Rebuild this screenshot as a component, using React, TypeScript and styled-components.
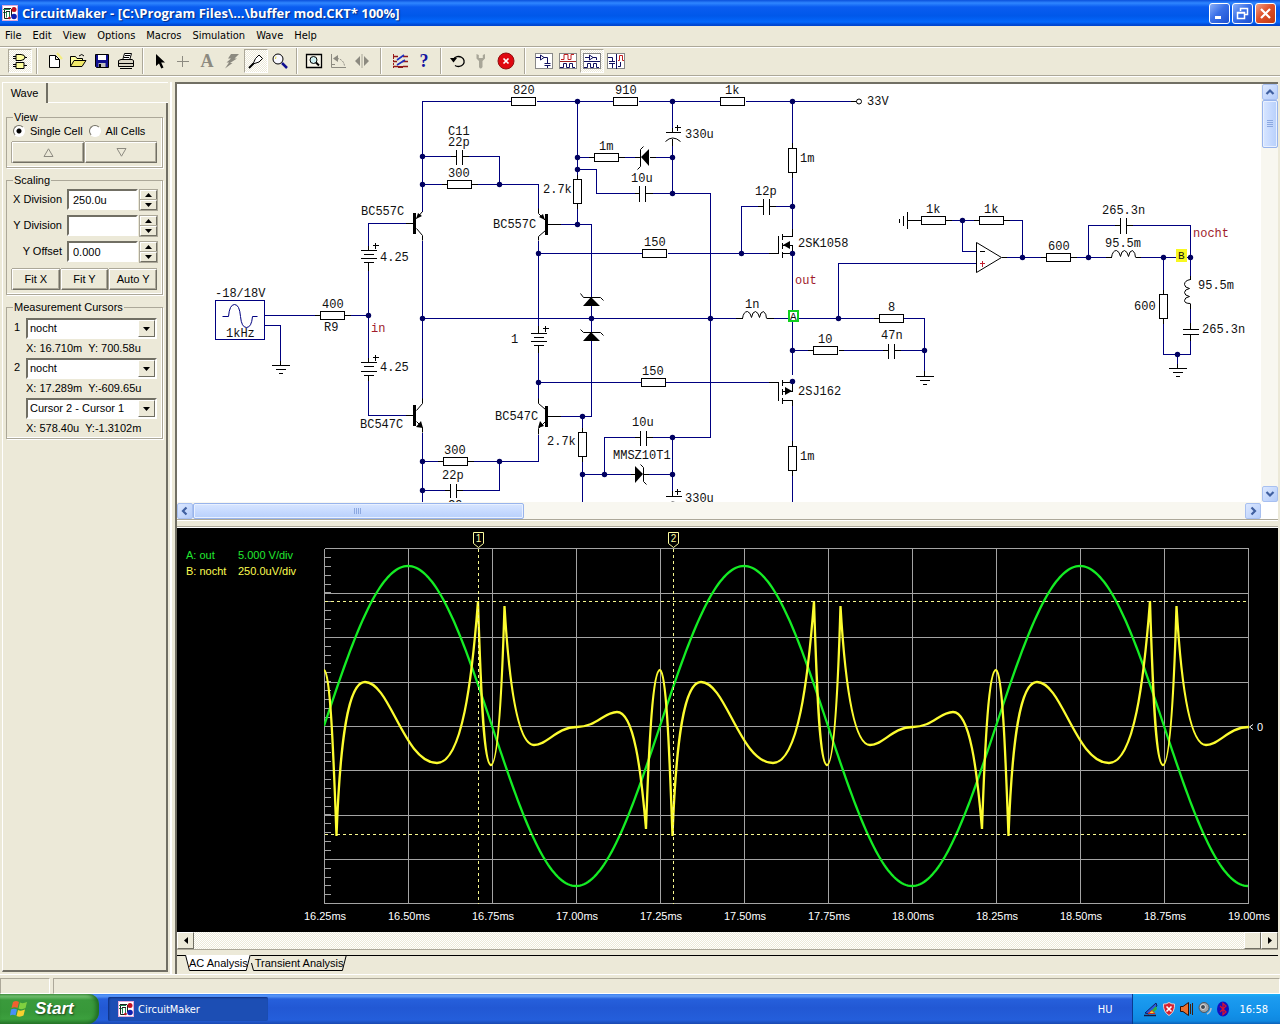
import React from "react";
import styled, { createGlobalStyle, css } from "styled-components";

const face = "#ece9d8";
const shade = "#aca899";
const dark = "#716f64";
const ui = `"Liberation Sans", Arial, sans-serif`;
const tahoma = `"DejaVu Sans Condensed", "DejaVu Sans", sans-serif`;

const Global = createGlobalStyle`
  * { box-sizing: border-box; }
  body { margin: 0; background: ${face}; color: #000; font: 11px/13px ${ui}; overflow: hidden; }
  button, input, select { font: inherit; color: inherit; margin: 0; }
`;

const Desktop = styled.div`
  min-height: 100vh;
  display: flex;
  flex-direction: column;
`;

/* ---------- title bar and menu ---------- */
const TitleBar = styled.header`
  display: flex;
  align-items: center;
  gap: 4px;
  height: 26px;
  padding: 0 4px 0 2px;
  background: linear-gradient(#0a50dc 0, #2f86ff 3px, #0a5cf0 7px, #0058ea 16px, #0468fc 22px, #0046d0 25px);
`;
const Title = styled.h1`
  flex: 1;
  margin: 0;
  font: 700 13px/20px "Open Sans", "Noto Sans", sans-serif;
  color: #fff;
  text-shadow: 1px 1px 1px #0a2a80;
  white-space: nowrap;
`;
const Caption = styled.div`
  display: flex;
  gap: 2px;
`;
const CaptionButton = styled.button<{ $close?: boolean }>`
  width: 21px;
  height: 21px;
  padding: 0;
  border: 1px solid #fff;
  border-radius: 3px;
  background: ${p => p.$close
    ? "linear-gradient(135deg, #f0a088, #e0502a 45%, #c03a10)"
    : "linear-gradient(135deg, #8cb0f8, #3a70e8 45%, #1c50d0)"};
  svg { display: block; margin: auto; }
`;
const MenuBar = styled.nav`
  display: flex;
  gap: 1px;
  height: 20px;
  padding: 0 0 2px;
`;
const MenuItem = styled.button`
  padding: 0 5px;
  border: 0;
  background: none;
  font-family: ${tahoma};
`;

/* ---------- toolbar ---------- */
const Toolbar = styled.div`
  display: flex;
  align-items: center;
  height: 30px;
  padding-left: 8px;
  border-top: 1px solid ${shade};
  border-bottom: 1px solid ${shade};
  box-shadow: inset 0 1px 0 #fff, 0 1px 0 #fff;
`;
const dither = `repeating-conic-gradient(#fff 0 25%, ${face} 0 50%) 0 0 / 2px 2px`;
const ToolButton = styled.button<{ $pressed?: boolean }>`
  width: 24px;
  height: 24px;
  padding: 0;
  border: 1px solid transparent;
  background: none;
  ${p => p.$pressed && css`
    background: ${dither};
    border-color: ${shade} #fff #fff ${shade};
  `}
  svg { display: block; margin: auto; }
`;
const Separator = styled.span<{ $wide?: boolean }>`
  width: 2px;
  height: 26px;
  margin: 0 ${p => (p.$wide ? 6 : 4)}px;
  border-left: 1px solid ${shade};
  border-right: 1px solid #fff;
`;

/* ---------- work area ---------- */
const Work = styled.main`
  flex: 1;
  display: flex;
  min-height: 0;
  padding: 6px 2px 0 0;
`;
const Side = styled.aside`
  flex: 0 0 175px;
  display: flex;
  flex-direction: column;
  padding: 0 7px 2px 2px;
  background: linear-gradient(#fff, #fff) 170px 0 / 2px 100% no-repeat;
`;
const SideTabs = styled.div`
  display: flex;
  height: 21px;
  border-top: 1px solid #fff;
`;
const SideTab = styled.button`
  width: 46px;
  padding: 0;
  border: 0;
  border-left: 1px solid #fff;
  border-right: 2px solid ${dark};
  background: ${face};
`;
const SideTabRest = styled.span`
  flex: 1;
  border-bottom: 1px solid #fff;
`;
const SidePage = styled.div`
  flex: 1;
  display: flex;
  flex-direction: column;
  gap: 6px;
  padding: 8px 3px 0 3px;
  border-left: 1px solid #fff;
  border-right: 2px solid ${dark};
  border-bottom: 2px solid ${dark};
`;
const Group = styled.fieldset`
  min-width: 0;
  margin: 0;
  padding: 0 5px 4px;
  border: 1px solid ${shade};
  box-shadow: inset -1px -1px 0 #fff, 1px 1px 0 #fff;
  legend { padding: 0 1px; margin-left: 1px; line-height: 13px; }
`;
const Radios = styled.div`
  display: flex;
  gap: 6px;
  height: 14px;
  margin-bottom: 4px;
  padding-left: 1px;
`;
const RadioLabel = styled.label`
  display: flex;
  align-items: center;
  gap: 5px;
  white-space: nowrap;
`;
const Radio = styled.input`
  appearance: none;
  width: 12px;
  height: 12px;
  border-radius: 50%;
  border: 1px solid;
  border-color: ${dark} #fff #fff ${dark};
  background: #fff;
  &:checked { background: radial-gradient(circle, #000 0 2px, #fff 3px); }
`;
const ButtonRow = styled.div<{ $top?: boolean }>`
  display: flex;
  gap: 1px;
  ${p => p.$top && "margin-top: 7px;"}
`;
const PushButton = styled.button`
  flex: 1 1 0;
  height: 21px;
  padding: 0;
  border: 1px solid;
  border-color: #fff ${dark} ${dark} #fff;
  background: ${face};
  box-shadow: inset -1px -1px 0 ${shade}, 0 -1px 0 ${shade}, -1px 0 0 ${shade};
  white-space: nowrap;
  svg { display: block; margin: auto; }
`;
const ScaleRow = styled.div`
  display: flex;
  align-items: center;
  height: 21px;
  margin-top: 5px;
  legend + & { margin-top: 2px; }
  label { flex: 1; padding-right: 5px; text-align: right; white-space: nowrap; }
`;
const sunken = css`
  border: 2px solid;
  border-color: ${dark} #fff #fff ${dark};
  background: #fff;
`;
const Field = styled.input`
  ${sunken}
  width: 71px;
  height: 21px;
  padding: 0 4px;
`;
const Spinner = styled.div`
  display: flex;
  flex-direction: column;
  width: 17px;
  margin-left: 2px;
  button {
    height: 10px;
    padding: 0;
    border: 1px solid;
    border-color: #fff ${dark} ${dark} #fff;
    background: ${face};
    box-shadow: 0 0 0 1px ${shade};
  }
  svg { display: block; margin: auto; }
`;
const CursorRow = styled.div`
  display: grid;
  grid-template-columns: 14px 1fr;
  padding: 4px 0 0;
  p { grid-column: 2; margin: 3px 0 0; height: 12px; white-space: pre; }
  > span { padding: 3px 0 0 2px; }
`;
const Combo = styled.div`
  ${sunken}
  display: grid;
  grid-template-columns: 1fr 17px;
  height: 21px;
  select {
    appearance: none;
    grid-area: 1 / 1 / 2 / 3;
    border: 0;
    border-radius: 0;
    padding: 0 20px 0 2px;
    background: #fff;
  }
  span {
    grid-area: 1 / 2;
    display: flex;
    align-items: center;
    justify-content: center;
    pointer-events: none;
    border: 1px solid;
    border-color: #fff ${dark} ${dark} #fff;
    background: ${face};
  }
`;

/* ---------- documents ---------- */
const Documents = styled.section`
  flex: 1;
  min-width: 0;
  display: flex;
  flex-direction: column;
  border-left: 2px solid ${dark};
  border-top: 2px solid ${dark};
`;
const Sheet = styled.div`
  display: grid;
  grid-template-columns: minmax(0, 1fr) 17px;
  grid-template-rows: auto 17px;
  background: #fff;
  border-bottom: 1px solid ${shade};
`;
const Viewport = styled.div`
  overflow: hidden;
  svg { display: block; }
`;
const Bar = styled.div<{ $vertical?: boolean }>`
  display: flex;
  flex-direction: ${p => (p.$vertical ? "column" : "row")};
  justify-content: space-between;
  background: #f8f7f0;
  padding: ${p => (p.$vertical ? "0 0 0 1px" : "1px 0 0")};
`;
const BarStart = styled.div<{ $vertical?: boolean }>`
  display: flex;
  flex-direction: ${p => (p.$vertical ? "column" : "row")};
  width: ${p => (p.$vertical ? "auto" : "32%")};
  height: ${p => (p.$vertical ? "64px" : "auto")};
`;
const BarArrow = styled.button`
  flex: none;
  width: 16px;
  height: 16px;
  padding: 0;
  border: 1px solid #a8c0f0;
  border-radius: 2px;
  background: linear-gradient(135deg, #dce8ff, #b4ccfa);
  svg { display: block; margin: auto; }
`;
const Thumb = styled.div<{ $vertical?: boolean }>`
  flex: 1;
  display: flex;
  align-items: center;
  justify-content: center;
  border: 1px solid #98b4ec;
  border-radius: 2px;
  box-shadow: inset 0 0 0 1px #e8f0ff;
  background: linear-gradient(${p => (p.$vertical ? "90deg" : "180deg")}, #d8e6ff, #c4d8fe 60%, #b8d0fa);
`;
const Splitter = styled.div`
  height: 8px;
  border-top: 1px solid #fff;
  border-bottom: 1px solid #fff;
  box-shadow: inset 0 -1px 0 ${shade};
`;
const Scope = styled.div`
  flex: 1;
  overflow: hidden;
  background: #000;
  svg { display: block; }
`;
const ClassicBar = styled.div`
  display: flex;
  height: 17px;
  background: ${dither};
  button, span {
    width: 17px;
    padding: 0;
    border: 1px solid;
    border-color: #fff ${dark} ${dark} #fff;
    background: ${face};
  }
  span { margin-left: auto; }
  svg { display: block; margin: auto; }
`;
const SheetTabs = styled.div`
  display: flex;
  height: 25px;
  padding: 0 0 0 8px;
  border-top: 1px solid ${shade};
  background: linear-gradient(#000, #000) 0 5px / 100% 1px no-repeat;
`;
const SheetTab = styled.button`
  position: relative;
  z-index: 0;
  height: 16px;
  margin: 5px 0 0;
  padding: 0 3px 0 4px;
  border: 0;
  background: none;
  white-space: nowrap;
  svg { position: absolute; inset: 0; width: 100%; height: 100%; z-index: -1; }
`;

/* ---------- status bar and taskbar ---------- */
const StatusBar = styled.footer`
  display: flex;
  gap: 3px;
  height: 20px;
  padding-top: 3px;
  border-top: 1px solid #fff;
`;
const StatusCell = styled.div<{ $grow?: boolean }>`
  flex: ${p => (p.$grow ? "1" : "0 0 50px")};
  border: 1px solid;
  border-color: ${shade} #fff #fff ${shade};
`;
const Taskbar = styled.nav`
  display: flex;
  align-items: stretch;
  height: 30px;
  background: linear-gradient(#3a80f0 0, #5a98f8 2px, #2660dc 5px, #2258d4 14px, #245edb 26px, #1a48b0 30px);
  color: #fff;
  font-family: ${tahoma};
`;
const Start = styled.button`
  display: flex;
  align-items: center;
  gap: 6px;
  width: 99px;
  padding: 0 0 0 10px;
  border: 0;
  border-radius: 0 10px 12px 0;
  background: linear-gradient(#5fb45c 0, #7cc878 2px, #3a9a3c 6px, #379839 18px, #3ca03e 25px, #2a7c2c 30px);
  box-shadow: inset -3px 0 4px #1f6a22;
  font: italic bold 17px/20px ${ui};
  && { color: #fff; }
  text-shadow: 1px 1px 2px #1a401a;
`;
const Task = styled.button`
  display: flex;
  align-items: center;
  gap: 4px;
  width: 160px;
  margin: 3px auto 3px 9px;
  padding: 0 10px;
  border: 0;
  border-radius: 2px;
  background: #1c4eb4;
  box-shadow: inset 1px 1px 2px #0e2f80;
  && { color: #fff; }
`;
const Language = styled.span`
  align-self: center;
  margin-right: 20px;
`;
const Tray = styled.div`
  display: flex;
  align-items: center;
  gap: 2px;
  padding: 0 12px 0 10px;
  border-left: 1px solid #0a3a90;
  background: linear-gradient(#1ab0f8 0, #1c9cf0 3px, #1290e8 20px, #0f88e0 27px, #0c60b8 30px);
  time { margin-left: 6px; }
`;

/* ---------- icons ---------- */
const Svg = ({ w = 18, h = 18, children }: { w?: number; h?: number; children: React.ReactNode }) => (
  <svg width={w} height={h} viewBox={`0 0 ${w} ${h}`} fill="none" stroke="#000" aria-hidden="true">{children}</svg>
);

const AppIcon = () => (
  <Svg w={16} h={16}>
    <rect x=".5" y=".5" width="15" height="15" fill="#fff" stroke="#e0a8d8" />
    <path d="M1 4.500H8M1 7.500H4M4.500 6V12.500M7.500 6V13" stroke="#208850" />
    <path d="M2 3.500H9M4 6.500H8M9.500 4V11M2.500 5V13.500H8" stroke="#202020" />
    <circle cx="12" cy="4.500" r="2.500" fill="#c01020" stroke="none" />
    <circle cx="12" cy="11.500" r="2.800" fill="#1020b0" stroke="none" />
    <circle cx="7.500" cy="13" r="1.300" fill="#c01020" stroke="none" />
  </Svg>
);

type Tool = { name: string; pressed?: boolean; icon: React.ReactNode };
const waveUp = "M2 7.500H5V2.500H9V7.500H12V2.500H15";
const groups: { wide?: boolean; tools: Tool[] }[] = [
  { tools: [
    { name: "Digital parts", pressed: true, icon: <>
      <path d="M5 2.500H10Q14 3 14 5Q14 8 10 8.500H5ZM2 4.500H5M2 6.500H5M14 5.500H16" fill="#ffffa0" />
      <path d="M5 10.500H13V16.500H5ZM2 12.500H5M2 14.500H5M13 13.500H16" fill="#ffffa0" />
    </> },
  ] },
  { tools: [
    { name: "New", icon: <><path d="M12 1L17 7" stroke="#f4ee80" strokeWidth="2" /><path d="M4.500 3.500H10.500L14.500 7.500V15.500H4.500ZM10.500 3.500V7.500H14.500" fill="#fff" /></> },
    { name: "Open", icon: <><path d="M1.500 14.500V4.500H6.500L8 6.500H13.500V9" fill="#ffffa0" /><path d="M1.500 14.500L5 8.500H17L13 14.500Z" fill="#f0e868" /><path d="M10 4Q13 1 15 4" /></> },
    { name: "Save", icon: <><path d="M2.500 2.500H15.500V15.500H3.500L2.500 14.500Z" fill="#101090" /><path d="M5 3H13V8H5Z" fill="#fff" stroke="none" /><path d="M5.500 11H12.500V15H5.500Z" fill="#c0c0c0" stroke="none" /><path d="M7 12V15" strokeWidth="2" /></> },
    { name: "Print", icon: <><path d="M5.500 8.500L7.500 1.500H14.500L12.500 8.500" fill="#fff" /><path d="M8 3.500H13M7 5.500H12" /><path d="M1.500 8.500L4 7.500H15L16.500 8.500V14.500H1.500ZM1.500 11.500H16.500M3 16.500H15" fill="#d8d4c4" /></> },
  ] },
  { tools: [
    { name: "Select", icon: <path d="M5 2V14L8 11.500L10.300 16.500L12.500 15.500L10.200 10.500H14Z" fill="#000" stroke="none" /> },
    { name: "Wire", icon: <path d="M2 9.500H14M7.500 4V15" stroke="#8c8a80" /> },
    { name: "Text", icon: <text x="8" y="15" textAnchor="middle" fontFamily="Liberation Serif, serif" fontSize="18" fontWeight="bold" fill="#8c8a80" stroke="none">A</text> },
    { name: "Delete", icon: <path d="M8 2H16L11.500 6.500H14L7 11H9.500L2 16.500L6 10.500H3.500L8 6.500H5Z" fill="#8c8a80" stroke="none" /> },
    { name: "Probe", pressed: true, icon: <><path d="M2 16L6.500 11.500" strokeWidth="2" /><path d="M6 12L8.500 6.500L12 3L15.500 6.500L12 10Z" fill="#fff" /></> },
    { name: "Zoom", icon: <><circle cx="7" cy="7" r="5" fill="#f8f8ff" /><path d="M5 4.500L4.500 7" stroke="#e0d840" /><path d="M11 11L16 16" stroke="#101090" strokeWidth="2.500" /></> },
  ] },
  { tools: [
    { name: "Fit to window", icon: <><path d="M1.500 2.500H16.500V15.500H1.500Z" fill="#f8f6ea" strokeWidth="1.300" /><circle cx="8.500" cy="8" r="3.500" fill="#cdeef0" /><path d="M11 10.500L14 13.500" strokeWidth="2" /></> },
    { name: "Rotate", icon: <><path d="M2.500 2V15.500H17M2.500 12.500H6" stroke="#8c8a80" /><path d="M8 6.500A8 8 0 0 1 15.500 14" stroke="#8c8a80" strokeDasharray="2 1" /><path d="M4 6.500L9 3V10Z" fill="#8c8a80" stroke="none" /></> },
    { name: "Mirror", icon: <><path d="M9 2V16" stroke="#a8a698" /><path d="M7 4V14L2 9ZM11 4V14L16 9Z" fill="#8c8a80" stroke="none" /></> },
  ] },
  { wide: true, tools: [
    { name: "Connections", icon: <>
      <path d="M2.500 2V16" stroke="#a01818" strokeDasharray="2 1" />
      <path d="M2 4.500H7M12 4.500H17M2 9.500H6M11 9.500H17M2 14.500H7M12 14.500H17" stroke="#901818" strokeWidth="1.600" />
      <path d="M6 8L13 3M6 13L14 8" stroke="#2030c0" strokeWidth="1.600" />
      <path d="M7 15H12" stroke="#901818" strokeWidth="2" />
    </> },
    { name: "Help", icon: <text x="9" y="15" textAnchor="middle" fontFamily="Liberation Serif, serif" fontWeight="bold" fontSize="18" fill="#1414a0" stroke="none">?</text> },
  ] },
  { tools: [
    { name: "Reset", icon: <><path d="M4.500 7A5.700 5 0 1 1 6 13.500" strokeWidth="1.300" /><path d="M1 6H8L4.500 10.500Z" fill="#000" stroke="none" /></> },
    { name: "Setup", icon: <path d="M3.500 2V6.500L6 9V15Q7.500 18 9.500 15V9L12 6.500V2L9.800 3V6H5.800V3Z" fill="#a8a698" stroke="none" /> },
    { name: "Stop", icon: <><circle cx="9" cy="9" r="8" fill="#e00810" stroke="#901010" /><path d="M6.500 6.500L11.500 11.500M11.500 6.500L6.500 11.500" stroke="#fff" strokeWidth="1.700" /></> },
  ] },
  { wide: true, tools: [
    { name: "Schematic view", icon: <><rect x=".5" y="1.500" width="17" height="15" fill="#fff" stroke="#888" /><path d="M1 5.500H5M5.500 3V8L9 5.500ZM9 5.500H12.500V11M9.500 11.500H15.500M9.500 13.500H15.500M12.500 14V16" stroke="#101060" /></> },
    { name: "Wave view", icon: <><rect x=".5" y="1.500" width="17" height="15" fill="#fff" stroke="#888" /><path d={waveUp} stroke="#c02020" /><path d="M1 9.500H17" stroke="#a02020" /><path d="M1 15.500H4.500V11.500H7.500V15.500H10.500V11.500H13.500V15.500H16" stroke="#101060" /></> },
    { name: "Split horizontal", pressed: true, icon: <><rect x=".5" y="1.500" width="17" height="15" fill="#fff" stroke="#888" /><path d="M2 5.500H6M6.500 3V8L10 5.500ZM10 5.500H13.500V8M1 9.500H17M1 15.500H4.500V11.500H7.500V15.500H10.500V11.500H13.500V15.500H16" stroke="#101060" /></> },
    { name: "Split vertical", icon: <><rect x=".5" y="1.500" width="17" height="15" fill="#fff" stroke="#888" /><path d="M1 5.500H5.500V9M2 9.500H8M2 11.500H8M5.500 12V16M9.500 2V17M11 14.500H13.500V10" stroke="#101060" /><path d="M11 8.500H12.500V3.500H15.500V8.500H17" stroke="#c02020" /></> },
  ] },
];

const Triangle = ({ d, fill = "#000", w = 7, h = 4 }: { d: string; fill?: string; w?: number; h?: number }) => (
  <Svg w={w} h={h}><path d={d} fill={fill} stroke="none" /></Svg>
);
const down = "M0 0H7L3.500 4Z";
const up = "M0 4H7L3.500 0Z";

/* ---------- schematic ---------- */
type Pt = [number, number];

const wires = [
  "M422 211V101H511M536 101H613M638 101H720M745 101H850M422 156H450M468 156H499V184M422 184H441M477 184H538V208",
  "M368 315V270M368 245V223H405M422 240V398M368 315V357M368 380V415H405M422 432V502",
  "M264 315H314M350 315H368M264 325H280V360M422 318H735M773 318H873M903 318H924V370M422 461H437M473 461H538V434",
  "M422 490H444M462 490H499V461M538 240V325M538 352V398M538 253H642M667 253H768M538 382H641M665 382H768",
  "M577 101V174M577 208V224M560 224H591V416H560M577 157H588M624 157H634M655 157H672M577 169H596V193H634M652 193H710V437H652",
  "M672 101V127M672 145V193M792 101V142M792 177V228M741 253V206H757M775 206H792M792 253V374M792 405V440M792 475V502",
  "M838 318V263H976M792 350H807M843 350H882M900 350H924M582 416V427M582 461V502M582 474H630M648 474H672M604 474V437H634M672 437V490",
  "M951 220H973M962 220V251H976M1009 220H1022V257M1006 257H1040M1076 257H1105M1088 257V225H1114M1132 225H1190V275M1140 257H1190",
  "M1163 257V289M1163 323V354H1190V340M1190 308V322M1177 354V363",
];
const leads = [
  "M368 245V250M368 262V270M368 357V362M368 375V380M538 325V333M538 345V352",
  "M450 156H456M462 156H468M441 184H447M471 184H477M314 315H320M344 315H350M437 461H443M467 461H473M444 490H450M456 490H462",
  "M405 223H414M405 415H414M547 224H560M547 416H560M588 157H594M618 157H624M634 157H640M649 157H655M634 193H639M645 193H652",
  "M577 174V179M577 203V208M672 127V132M672 138V145M792 142V148M792 172V177M757 206H763M769 206H775M768 253H778M768 382H778",
  "M582 427V432M582 456V461M630 474H635M643 474H648M634 437H640M646 437H652M672 490V496M792 440V446M792 470V475",
  "M807 350H813M838 350H843M882 350H888M894 350H900M873 318H879M924 370V376M280 360V365M735 318H742M766 318H773M850 101H856",
  "M907 220H921M945 220H951M973 220H979M1003 220H1009M1001 257H1006M1040 257H1046M1070 257H1076M1114 225H1120M1126 225H1132",
  "M1105 257H1111M1135 257H1140M1163 289V294M1163 318V323M1190 275V279M1190 303V308M1190 322V329M1190 334V340M1177 363V368",
];
/* capacitor and battery plates, ground bars, transistor terminals */
const plates = [
  "M456 149V164M462 149V164M450 483V497M456 483V497M639 185V201M645 185V201M640 430V445M646 430V445M763 198V214M769 198V214M888 343V358M894 343V358M1120 217V233M1126 217V233M1182 329H1198M1182 334H1198",
  "M360 250H376M363 254H373M360 258H376M363 262H373M360 362H376M363 366H373M360 371H376M363 375H373M530 333H546M533 337H543M530 341H546M533 345H543",
  "M372 245H378M375 242V248M372 357H378M375 354V360M542 328H548M545 325V331M674 127H680M677 124V130M674 491H680M677 488V494M665 132H680M665 496H681",
  "M271 365H289M275 369H285M278 373H282M915 376H933M919 380H929M922 384H926M1168 368H1186M1172 372H1182M1175 376H1179M907 211V228M903 215V225M899 218V222",
  "M778 235V253M782 233V239M782 242V248M782 251V257M782 236H792V228M782 245H792V253H782M778 382V400M782 379V385M782 388V394M782 397V403M782 382H792V391H782M782 400H792V405",
  "M979 251H984",
];
const curves = [
  "M416 218L422 211M416 228L422 235V240M416 410L422 403V398M416 421L422 427V432M545 220L538 213V208M545 230L538 236V240M545 409L538 403V398M545 421L538 428V434",
  "M580 293L583 297H600L603 300M580 329L583 332H600L603 335M643 146L640 149V166L637 169M640 464L643 467V481L646 484",
  "M665 141Q672 134 680 141M665 505Q672 498 680 505",
  "M742 318Q743 311 747 311Q750 312 751 317Q752 311 755 311Q758 312 759 317Q760 311 763 311Q766 313 766 318",
  "M1111 257Q1112 250 1116 250Q1119 251 1120 256Q1121 250 1124 250Q1127 251 1128 256Q1129 250 1132 250Q1135 252 1135 257",
  "M1190 279Q1184 280 1184 284Q1184 287 1189 288Q1184 289 1184 292Q1184 295 1189 296Q1184 297 1184 300Q1184 303 1190 303",
  "M976 242V272L1001 257Z",
];
const solids = [
  "M591 297L583 306H600ZM591 332L583 341H600ZM641 157L649 149V166ZM643 474L635 466V483Z",
  "M783 245L790 241V249ZM792 391L785 387V395Z",
  "M416 219L418 213L422 216ZM423 428L416 427L421 421ZM545 220L543 214L539 217ZM538 428L544 426L540 421Z",
  "M413 213H416V234H413ZM413 405H416V426H413ZM545 214H548V235H545ZM545 406H548V427H545Z",
];
const flatResistors: Pt[] = [[511, 101], [613, 101], [720, 101], [447, 184], [320, 315], [443, 461], [594, 157], [642, 253], [641, 382], [813, 350], [879, 318], [921, 220], [979, 220], [1046, 257]];
const tallResistors: Pt[] = [[577, 179], [582, 432], [792, 148], [792, 446], [1163, 294]];
const dots: Pt[] = [[422, 156], [422, 184], [499, 184], [577, 101], [672, 101], [792, 101], [577, 157], [577, 169], [672, 157], [672, 193], [577, 224], [538, 253], [538, 382], [741, 253], [792, 206], [792, 253], [368, 315], [422, 318], [591, 318], [710, 318], [838, 318], [792, 350], [792, 381], [924, 350], [582, 416], [582, 474], [604, 474], [672, 474], [672, 437], [422, 461], [499, 461], [422, 490], [962, 220], [1022, 257], [1088, 257], [1163, 257], [1190, 257], [1177, 354]];
const labels: [number, number, string][] = [
  [513, 94, "820"], [615, 94, "910"], [725, 94, "1k"], [867, 105, "33V"], [448, 135, "C11"], [448, 146, "22p"], [448, 177, "300"],
  [361, 215, "BC557C"], [493, 228, "BC557C"], [380, 261, "4.25"], [380, 371, "4.25"], [215, 297, "-18/18V"], [226, 337, "1kHz"],
  [322, 308, "400"], [324, 331, "R9"], [360, 428, "BC547C"], [495, 420, "BC547C"], [444, 454, "300"], [442, 479, "22p"], [448, 509, "C9"],
  [511, 343, "1"], [599, 150, "1m"], [543, 193, "2.7k"], [631, 182, "10u"], [685, 138, "330u"], [800, 162, "1m"], [755, 195, "12p"],
  [644, 246, "150"], [642, 375, "150"], [798, 247, "2SK1058"], [798, 395, "2SJ162"], [745, 308, "1n"], [888, 311, "8"], [818, 343, "10"],
  [881, 339, "47n"], [547, 445, "2.7k"], [632, 426, "10u"], [613, 459, "MMSZ10T1"], [685, 502, "330u"], [800, 460, "1m"],
  [926, 213, "1k"], [984, 213, "1k"], [1048, 250, "600"], [1102, 214, "265.3n"], [1105, 247, "95.5m"], [1134, 310, "600"],
  [1198, 289, "95.5m"], [1202, 333, "265.3n"],
];
const netNames: [number, number, string][] = [[371, 332, "in"], [795, 284, "out"], [1193, 237, "nocht"]];

const Schematic = () => (
  <svg width="1084" height="418" viewBox="177 84 1084 418" role="img" aria-label="Circuit schematic">
    <g transform="translate(.5 .5)" fill="none" shapeRendering="crispEdges">
      <g stroke="#000080">
        {wires.map(d => <path key={d} d={d} />)}
        <rect x="215" y="300" width="49" height="39" />
      </g>
      <g stroke="#000">
        {leads.map(d => <path key={d} d={d} />)}
        {plates.map(d => <path key={d} d={d} />)}
        {flatResistors.map(([x, y]) => <rect key={`${x}-${y}`} x={x} y={y - 4} width="24" height="8" fill="#fff" />)}
        {tallResistors.map(([x, y]) => <rect key={`${x}-${y}`} x={x - 4} y={y} width="8" height="24" fill="#fff" />)}
      </g>
      <path d="M979 263H984M982 260V266" stroke="#c02030" />
    </g>
    <g transform="translate(.5 .5)" fill="none" stroke="#000">
      {curves.map(d => <path key={d} d={d} />)}
      <circle cx="858.500" cy="101" r="2.500" fill="#fff" />
      <path d="M222 316H228Q229 304 234 304Q239 304 240 316Q241 327 246 327Q251 327 252 316H257" stroke="#000080" />
    </g>
    <g>{solids.map(d => <path key={d} d={d} />)}</g>
    <g fill="#000060">{dots.map(([x, y]) => <circle key={`${x}-${y}`} cx={x + 0.5} cy={y + 0.5} r="2.700" />)}</g>
    <rect x="789" y="311" width="9" height="10" fill="#fff" stroke="#10d020" strokeWidth="2" />
    <rect x="1176" y="249" width="11" height="13" fill="#f8f820" />
    <g fontFamily="Liberation Mono, Courier New, monospace" fontSize="12" fill="#101010">
      {labels.map(([x, y, t]) => <text key={`${x}-${y}`} x={x} y={y}>{t}</text>)}
      <text x="790" y="320" fontSize="11">A</text>
      <text x="1178" y="259" fontSize="11">B</text>
      <g fill="#a01c2c">{netNames.map(([x, y, t]) => <text key={t} x={x} y={y}>{t}</text>)}</g>
    </g>
  </svg>
);

/* ---------- oscilloscope ---------- */
const left = 324;
const division = 84;
const period = division * 4;
const middle = 726;

const sine = Array.from({ length: 463 }, (_, i) => {
  const x = i * 2;
  return `${left + x},${(middle - 160 * Math.sin((x / period) * 2 * Math.PI)).toFixed(1)}`;
}).join(" ");

/* one period of the notch output, starting on its rounded crest */
const residue =
  "M0 670C6 672 9 740 12.500 836C16 740 24 682 41 682C66 682 80 763 113 763C138 763 148 680 154 601C157 700 160 765 167 765C174 765 178 690 180.500 606C186 700 196 745 210 745C224 745 232 727 253 727C272 727 280 712 293 712C310 712 317 770 322 829C325 740 329 670 336 670";

const columns = Array.from({ length: 12 }, (_, i) => left + i * division);
const rows = [548, 593, 637, 682, 726, 770, 815, 859, 903];
const ticks = Array.from({ length: 40 }, (_, i) => Math.round(548 + i * 8.88));

const Waves = () => (
  <svg width="1101" height="404" viewBox="177 528 1101 404" role="img" aria-label="Transient analysis waveforms" fill="none">
    <defs>
      <clipPath id="plot"><rect x="324" y="548" width="925" height="356" /></clipPath>
    </defs>
    <g stroke="#a4a4a4" shapeRendering="crispEdges" transform="translate(.5 .5)">
      {columns.map(x => <path key={x} d={`M${x} 548V903`} />)}
      {rows.map(y => <path key={y} d={`M324 ${y}H1248`} />)}
      {ticks.map(y => <path key={y} d={`M324 ${y}H330`} />)}
    </g>
    <g clipPath="url(#plot)" strokeWidth="2.300">
      <polyline points={sine} stroke="#14ec24" />
      <g stroke="#fcfc30">
        {[0, 1, 2].map(n => <path key={n} d={residue} transform={`translate(${left + n * period} 0)`} />)}
      </g>
    </g>
    <g stroke="#f8f890" shapeRendering="crispEdges" transform="translate(.5 .5)">
      <path strokeDasharray="3 3" d="M478 548V903M673 548V903M324 601H1248M324 834H1248" />
    </g>
    <path d="M473.500 532.500H483.500V543.500L478.500 547.500L473.500 543.500ZM668.500 532.500H678.500V543.500L673.500 547.500L668.500 543.500Z" stroke="#fcfca0" />
    <path d="M1253 724.500L1249.500 727L1253 729.500" stroke="#fff" />
    <g fontFamily="Liberation Sans, Arial, sans-serif" fontSize="11" fill="#fff">
      <g fill="#fcfca0" fontSize="10" textAnchor="middle"><text x="478.500" y="542">1</text><text x="673.500" y="542">2</text></g>
      <g fill="#20e830"><text x="186" y="559">A: out</text><text x="238" y="559">5.000 V/div</text></g>
      <g fill="#fcfc50"><text x="186" y="575">B: nocht</text><text x="238" y="575">250.0uV/div</text></g>
      <text x="1257" y="731">0</text>
      <g textAnchor="middle">
        {columns.map((x, i) => <text key={x} x={x + 1} y="920">{(16.25 + i * 0.25).toFixed(2)}ms</text>)}
      </g>
    </g>
  </svg>
);

/* ---------- page ---------- */
const scales = [["X Division", "250.0u"], ["Y Division", ""], ["Y Offset", "0.000"]];
const cursors = [
  ["1", "nocht", "X: 16.710m  Y: 700.58u"],
  ["2", "nocht", "X: 17.289m  Y:-609.65u"],
  ["", "Cursor 2 - Cursor 1", "X: 578.40u  Y:-1.3102m"],
];
const menus = ["File", "Edit", "View", "Options", "Macros", "Simulation", "Wave", "Help"];

const Arrow = ({ d }: { d: string }) => (
  <Svg w={10} h={10}><path d={d} stroke="#4060a0" strokeWidth="2.200" /></Svg>
);

export default function App() {
  return (
    <Desktop>
      <Global />
      <TitleBar>
        <AppIcon />
        <Title>{"CircuitMaker - [C:\\Program Files\\...\\buffer mod.CKT* 100%]"}</Title>
        <Caption>
          <CaptionButton aria-label="Minimize"><Svg w={13} h={13}><path d="M2 10.500H8" stroke="#fff" strokeWidth="3" /></Svg></CaptionButton>
          <CaptionButton aria-label="Restore"><Svg w={13} h={13}><path d="M4.500 4V1.500H11.500V7.500H9M4 1.500H12" stroke="#fff" strokeWidth="1.500" /><path d="M1.500 5.500H8.500V11.500H1.500ZM1.500 6H8.500" stroke="#fff" strokeWidth="1.500" /></Svg></CaptionButton>
          <CaptionButton $close aria-label="Close"><Svg w={13} h={13}><path d="M2 2L11 11M11 2L2 11" stroke="#fff" strokeWidth="2.200" /></Svg></CaptionButton>
        </Caption>
      </TitleBar>
      <MenuBar>{menus.map(m => <MenuItem key={m}>{m}</MenuItem>)}</MenuBar>
      <Toolbar role="toolbar">
        {groups.map((g, i) => (
          <React.Fragment key={i}>
            {i > 0 && <Separator $wide={g.wide} />}
            {g.tools.map(t => (
              <ToolButton key={t.name} $pressed={t.pressed} aria-label={t.name}><Svg>{t.icon}</Svg></ToolButton>
            ))}
          </React.Fragment>
        ))}
      </Toolbar>

      <Work>
        <Side>
          <SideTabs><SideTab>Wave</SideTab><SideTabRest /></SideTabs>
          <SidePage>
            <Group>
              <legend>View</legend>
              <Radios>
                <RadioLabel><Radio type="radio" name="cells" defaultChecked />Single Cell</RadioLabel>
                <RadioLabel><Radio type="radio" name="cells" />All Cells</RadioLabel>
              </Radios>
              <ButtonRow>
                <PushButton aria-label="Previous cell"><Svg w={11} h={9}><path d="M1 8.500H10L5.500 .8Z" stroke="#8c8a80" /></Svg></PushButton>
                <PushButton aria-label="Next cell"><Svg w={11} h={9}><path d="M1 .5H10L5.500 8.200Z" stroke="#8c8a80" /></Svg></PushButton>
              </ButtonRow>
            </Group>
            <Group>
              <legend>Scaling</legend>
              {scales.map(([name, value], i) => (
                <ScaleRow key={name}>
                  <label htmlFor={`scale${i}`}>{name}</label>
                  <Field id={`scale${i}`} defaultValue={value} />
                  <Spinner>
                    <button aria-label={`${name} up`}><Triangle d={up} /></button>
                    <button aria-label={`${name} down`}><Triangle d={down} /></button>
                  </Spinner>
                </ScaleRow>
              ))}
              <ButtonRow $top>
                <PushButton>Fit X</PushButton><PushButton>Fit Y</PushButton><PushButton>Auto Y</PushButton>
              </ButtonRow>
            </Group>
            <Group>
              <legend>Measurement Cursors</legend>
              {cursors.map(([n, value, reading], i) => (
                <CursorRow key={i}>
                  <span>{n}</span>
                  <Combo>
                    <select aria-label={n ? `Cursor ${n} signal` : "Cursor difference"} defaultValue={value}><option>{value}</option></select>
                    <span><Triangle d={down} /></span>
                  </Combo>
                  <p>{reading}</p>
                </CursorRow>
              ))}
            </Group>
          </SidePage>
        </Side>

        <Documents>
          <Sheet>
            <Viewport><Schematic /></Viewport>
            <Bar $vertical>
              <BarStart $vertical>
                <BarArrow aria-label="Scroll up"><Arrow d="M1.500 7L5 3.500L8.500 7" /></BarArrow>
                <Thumb $vertical><Svg w={8} h={8}><path d="M1 .5H7M1 2.500H7M1 4.500H7M1 6.500H7" stroke="#8ca8e0" /></Svg></Thumb>
              </BarStart>
              <BarArrow aria-label="Scroll down"><Arrow d="M1.500 3L5 6.500L8.500 3" /></BarArrow>
            </Bar>
            <Bar>
              <BarStart>
                <BarArrow aria-label="Scroll left"><Arrow d="M6.500 1.500L3 5L6.500 8.500" /></BarArrow>
                <Thumb><Svg w={8} h={8}><path d="M.5 1V7M2.500 1V7M4.500 1V7M6.500 1V7" stroke="#8ca8e0" /></Svg></Thumb>
              </BarStart>
              <BarArrow aria-label="Scroll right"><Arrow d="M3.500 1.500L7 5L3.500 8.500" /></BarArrow>
            </Bar>
          </Sheet>
          <Splitter />
          <Scope><Waves /></Scope>
          <ClassicBar>
            <button aria-label="Scroll left"><Triangle d="M4 0V7L0 3.500Z" w={4} h={7} /></button>
            <span />
            <button aria-label="Scroll right"><Triangle d="M0 0V7L4 3.500Z" w={4} h={7} /></button>
          </ClassicBar>
          <SheetTabs>
            <SheetTab>
              <svg viewBox="0 0 66 16" preserveAspectRatio="none" aria-hidden="true"><path d="M0 0H66L62 15.500H4Z" fill="#fff" /><path d="M.5 0L4.500 15.500H61.500L65.500 0" fill="none" stroke="#000" /></svg>
              AC Analysis
            </SheetTab>
            <SheetTab>
              <svg viewBox="0 0 96 16" preserveAspectRatio="none" aria-hidden="true"><path d="M.5 8L2.500 15.500H91.500L95.500 0" fill="none" stroke="#000" /></svg>
              Transient Analysis
            </SheetTab>
          </SheetTabs>
        </Documents>
      </Work>

      <StatusBar><StatusCell /><StatusCell $grow /></StatusBar>

      <Taskbar>
        <Start>
          <Svg w={19} h={18}>
            <g stroke="none">
              <path d="M3 2Q6 0 9 2L7.500 8Q5 6.500 1.500 8Z" fill="#f06030" />
              <path d="M10 2.500Q13 4 17 2L15.500 8Q12 10 8.500 8.500Z" fill="#80d040" />
              <path d="M1 9.500Q4 8 7 9.500L5.500 15.500Q3 14 0 15.500Z" fill="#4890f8" />
              <path d="M8 10Q11 11.500 15 9.500L13.500 15.500Q10 17.500 6.500 16Z" fill="#f8d030" />
            </g>
          </Svg>
          Start
        </Start>
        <Task><AppIcon />CircuitMaker</Task>
        <Language>HU</Language>
        <Tray>
          <Svg w={16} h={16}><path d="M1 14.500H13" stroke="#181840" strokeWidth="1.500" /><path d="M2 12L13 2L14 5L6 13Z" fill="#2858e0" stroke="#102060" /><path d="M8 10L13 5L14 8L10 12Z" fill="#30b040" stroke="none" /><path d="M5 12.500L9 9.500L12 12.500Z" fill="#f0e040" stroke="#d03020" /></Svg>
          <Svg w={16} h={16}><path d="M8 1.500Q11 3.500 13.500 3Q14 11 8 14.500Q2 11 2.500 3Q5 3.500 8 1.500Z" fill="#d82030" stroke="#e8d0d0" /><path d="M5.500 5.500L10.500 10.500M10.500 5.500L5.500 10.500" stroke="#fff" strokeWidth="1.600" /></Svg>
          <Svg w={16} h={16}><path d="M1.500 5.500H4L9.500 1.500V14.500L4 10.500H1.500Z" fill="#e87030" stroke="#301008" /><path d="M11.500 3V13M13.500 2V14" stroke="#402010" /></Svg>
          <Svg w={16} h={16}><circle cx="7" cy="6.500" r="5" fill="#a0a4a8" stroke="#505860" /><circle cx="6" cy="6" r="2.500" fill="#404850" stroke="#e0e0e0" /><path d="M10 13Q14 11 14 7" stroke="#b0c0d0" strokeWidth="1.500" /></Svg>
          <Svg w={16} h={16}><ellipse cx="8" cy="8" rx="6" ry="7.500" fill="#1010c0" stroke="none" /><path d="M5 5L11 11L8 13.500V2.500L11 5L5 11" stroke="#d81030" strokeWidth="1.300" /></Svg>
          <time>16:58</time>
        </Tray>
      </Taskbar>
    </Desktop>
  );
}
